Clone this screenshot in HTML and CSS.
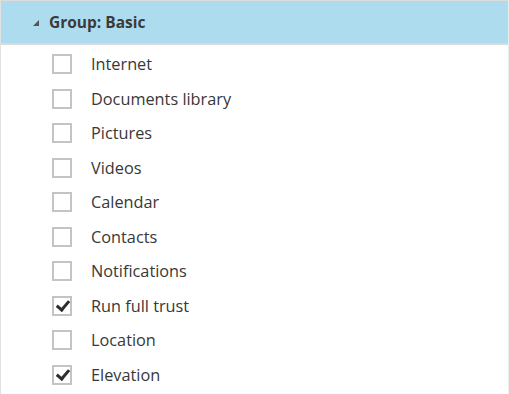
FILE: index.html
```html
<!DOCTYPE html>
<html>
<head>
  <title>Capabilities</title>
  <link rel="stylesheet" href="styles.css">
</head>
<body>
  <div class="panel">
    <div class="group-head">
      <span class="caret"></span>
      <span class="group-title">Group: Basic</span>
    </div>
    <ul class="caps">
      <li><span class="box"></span>Internet</li>
      <li><span class="box"></span>Documents library</li>
      <li><span class="box"></span>Pictures</li>
      <li><span class="box"></span>Videos</li>
      <li><span class="box"></span>Calendar</li>
      <li><span class="box"></span>Contacts</li>
      <li><span class="box"></span>Notifications</li>
      <li><span class="box checked"></span>Run full trust</li>
      <li><span class="box"></span>Location</li>
      <li><span class="box checked"></span>Elevation</li>
    </ul>
  </div>
</body>
</html>
```

FILE: styles.css
```css
body { margin: 0; background: #fff; font-family: "Open Sans", "Noto Sans", sans-serif; color: #383838; }
.panel {
  width: 507px;
  height: 394px;
  border-left: 1px solid #e2e2e2;
  border-right: 1px solid #ececec;
  border-top: 1px solid #dcdcdc;
  overflow: hidden;
}
.group-head {
  display: flex;
  align-items: center;
  height: 42px;
  background: #aedcef;
  border-bottom: 2px solid #dadada;
  padding-left: 32px;
}
.caret {
  width: 0;
  height: 0;
  border-left: 6px solid transparent;
  border-bottom: 6px solid #555;
  margin-right: 10px;
  margin-top: 2px;
}
.group-title { font-weight: 700; font-size: 15.5px; color: #3a3a3a; }
.caps { list-style: none; margin: 0; padding: 2px 0 0 0; }
.caps li {
  display: flex;
  align-items: center;
  height: 34.5px;
  padding-left: 51px;
  font-size: 16.3px;
}
.box {
  width: 16px;
  height: 16px;
  border: 2px solid #c4c4c4;
  margin-right: 19px;
  position: relative;
}
.box.checked::after {
  content: "";
  position: absolute;
  left: 5px;
  top: 0;
  width: 5px;
  height: 10px;
  border: solid #2e2e2e;
  border-width: 0 3px 3px 0;
  transform: rotate(40deg);
}
```
